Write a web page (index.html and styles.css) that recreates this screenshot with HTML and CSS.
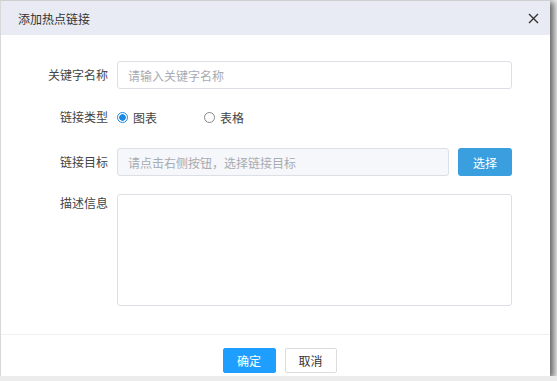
FILE: index.html
```html
<!DOCTYPE html>
<html lang="zh-CN">

<head>
    <meta charset="UTF-8">
    <meta name="viewport" content="width=device-width, initial-scale=1.0">
    <title>添加热点链接</title>
    <link rel="stylesheet" href="styles.css">
</head>

<body>
    <div class="dialog">
        <div class="dialog-header">
            <span class="dialog-title">添加热点链接</span>
            <span class="dialog-close">
                <svg width="11" height="11" viewBox="0 0 11 11">
                    <path d="M1 1 L10 10 M10 1 L1 10" stroke="#333" stroke-width="1.4" fill="none"/>
                </svg>
            </span>
        </div>
        <div class="dialog-body">
            <div class="form-row">
                <label class="form-label">关键字名称</label>
                <input class="form-input" type="text" placeholder="请输入关键字名称">
            </div>
            <div class="form-row row-radio">
                <label class="form-label">链接类型</label>
                <div class="radio-group">
                    <span class="radio checked"><i></i>图表</span>
                    <span class="radio"><i></i>表格</span>
                </div>
            </div>
            <div class="form-row row-target">
                <label class="form-label">链接目标</label>
                <input class="form-input input-short" type="text" placeholder="请点击右侧按钮，选择链接目标" readonly>
                <button class="btn-select">选择</button>
            </div>
            <div class="form-row row-desc">
                <label class="form-label">描述信息</label>
                <textarea class="form-textarea"></textarea>
            </div>
        </div>
        <div class="dialog-footer">
            <button class="btn btn-ok">确定</button>
            <button class="btn btn-cancel">取消</button>
        </div>
    </div>
</body>

</html>
```

FILE: styles.css
```css
* {
    margin: 0;
    padding: 0;
    box-sizing: border-box;
}
body {
    background: #ececec;
    font-family: "Noto Sans CJK SC", "Liberation Sans", sans-serif;
    font-size: 12px;
    color: #333;
}
.dialog {
    width: 550px;
    height: 376px;
    background: #fff;
    border-top: 1px solid #cfcfcf;
    border-left: 1px solid #d8d8d8;
    box-shadow: 4px 2px 6px rgba(0, 0, 0, .55);
    display: flex;
    flex-direction: column;
}
.dialog-header {
    height: 34px;
    flex: none;
    background: #e8ebf3;
    padding: 0 5px 0 17px;
    display: flex;
    align-items: center;
    justify-content: space-between;
}
.dialog-title {
    font-size: 12px;
    color: #333;
}
.dialog-close {
    width: 11px;
    height: 11px;
    margin-right: 6px;
    display: flex;
}
.dialog-body {
    flex: 1;
    padding-top: 26px;
}
.form-row {
    display: flex;
    align-items: center;
    gap: 9px;
}
.form-label {
    width: 107px;
    flex: none;
    text-align: right;
    color: #444;
    line-height: 18px;
}
.form-input {
    width: 395px;
    height: 28px;
    border: 1px solid #dcdfe6;
    border-radius: 3px;
    padding: 0 10px;
    outline: none;
    font-family: inherit;
    font-size: 12px;
    color: #333;
}
.form-input::placeholder {
    color: #a8abb2;
}
.row-radio {
    margin-top: 18px;
    height: 20px;
}
.radio-group {
    display: flex;
    align-items: center;
}
.radio {
    display: flex;
    align-items: center;
    gap: 5px;
    width: 87px;
    color: #444;
}
.radio i {
    width: 11px;
    height: 11px;
    border: 1px solid #888;
    border-radius: 50%;
    display: block;
}
.radio.checked i {
    border-color: #1e88e5;
    background: radial-gradient(circle, #1e88e5 0 3px, #fff 3.5px);
}
.row-target {
    margin-top: 21px;
}
.input-short {
    width: 332px;
    background: #f5f7fa;
}
.btn-select {
    width: 54px;
    height: 28px;
    border: none;
    border-radius: 3px;
    background: #3a9fdf;
    color: #fff;
    font-family: inherit;
    font-size: 12px;
}
.row-desc {
    margin-top: 18px;
    align-items: flex-start;
}
.form-textarea {
    width: 395px;
    height: 112px;
    border: 1px solid #dcdfe6;
    border-radius: 3px;
    resize: none;
    outline: none;
}
.dialog-footer {
    flex: none;
    height: 42px;
    border-top: 1px solid #eef0f4;
    padding: 13px 0 0 8px;
    display: flex;
    justify-content: center;
    gap: 9px;
}
.btn {
    width: 53px;
    height: 25px;
    border-radius: 2px;
    font-family: inherit;
    font-size: 12px;
}
.btn-ok {
    background: #1e9fff;
    border: 1px solid #1e9fff;
    color: #fff;
}
.btn-cancel {
    width: 52px;
    background: #fff;
    border: 1px solid #dcdcdc;
    color: #333;
}
```
